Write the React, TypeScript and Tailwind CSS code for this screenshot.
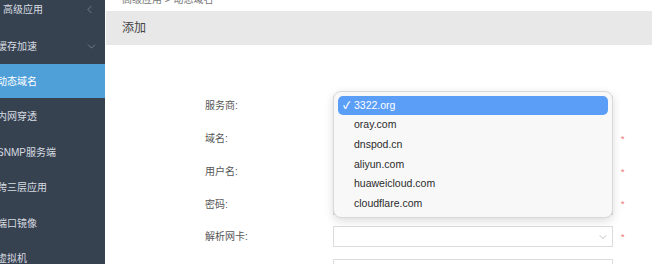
import { ChevronDown, ChevronLeft } from "lucide-react";

const font = { fontFamily: '"Liberation Sans", "Noto Sans CJK SC", sans-serif' };

const menu = ["内网穿透", "SNMP服务端", "跨三层应用", "端口镜像", "虚拟机"];

const providers = ["3322.org", "oray.com", "dnspod.cn", "aliyun.com", "huaweicloud.com", "cloudflare.com"];

function Sidebar() {
  return (
    <aside className="w-[105px] shrink-0 bg-[#374250] text-[10px] text-[#d6dbe1]">
      <div className="-mt-[9px] flex h-[37px] items-center justify-between pl-[3px] pr-[9px]">
        <span>高级应用</span>
        <ChevronLeft size={13} strokeWidth={1.3} className="text-[#8d96a1]" />
      </div>
      <div className="flex h-[36px] items-center justify-between pr-[7px]">
        <span className="-ml-[3px]">缓存加速</span>
        <ChevronDown size={13} strokeWidth={1.3} className="text-[#8d96a1]" />
      </div>
      <div className="flex h-[34px] items-center bg-[#4f9fd9] text-white">
        <span className="-ml-[3px]">动态域名</span>
      </div>
      <div className="pt-px">
        {menu.map((m) => (
          <div key={m} className="flex h-[35.5px] items-center">
            <span className="-ml-[3px] whitespace-nowrap">{m}</span>
          </div>
        ))}
      </div>
    </aside>
  );
}

function Row({ label, children, required }: { label: string; children?: React.ReactNode; required?: boolean }) {
  return (
    <div className="flex h-[32.75px] items-center">
      <div className="w-[128px] text-[10px] text-[#555]">{label}:</div>
      <div className="relative h-[21px] w-[280px]">{children}</div>
      {required && <span className="ml-[8px] mt-[2px] text-[9px] text-[#f36f6f]">*</span>}
    </div>
  );
}

function Popup() {
  return (
    <div className="absolute -top-[4.5px] left-0 z-10 w-[280px] rounded-[8px] border border-[#d9d9d9] bg-[#f8f8f8] p-[4px] shadow-[0_3px_10px_rgba(0,0,0,0.14)]">
      {providers.map((p, i) => (
        <div
          key={p}
          className={`relative flex h-[19.6px] items-center pl-[16px] text-[10.5px] ${
            i === 0 ? "rounded-[5px] bg-[#5a9ef7] text-white" : "text-[#2b2b2b]"
          }`}
        >
          {i === 0 && <span className="absolute left-[5px] text-[10px] font-bold">✓</span>}
          {p}
        </div>
      ))}
    </div>
  );
}

export default function App() {
  return (
    <div className="flex h-[264px] w-[666px] overflow-hidden bg-white" style={font}>
      <Sidebar />
      <main className="flex-1 pl-px pr-[14px]">
        <div className="-mt-[6px] h-[17px] pl-[16px] text-[10px] leading-[12px] text-[#777]">
          高级应用 &gt; 动态域名
        </div>
        <div className="flex h-[34px] items-center bg-[#e8e8e8] pl-[16px] text-[12px] text-[#444]">添加</div>
        <div className="mt-[44.5px] pl-[99px]">
          <Row label="服务商">
            <div className="h-full rounded-[2px] border border-[#dcdcdc]" />
            <Popup />
          </Row>
          <Row label="域名" required>
            <div className="h-full border border-[#dcdcdc]" />
          </Row>
          <Row label="用户名" required>
            <div className="h-full border border-[#dcdcdc]" />
          </Row>
          <Row label="密码" required>
            <div className="h-full border border-[#dcdcdc]" />
          </Row>
          <Row label="解析网卡" required>
            <div className="flex h-full items-center justify-end border border-[#dcdcdc] pr-[3px]">
              <ChevronDown size={12} strokeWidth={1.2} className="text-[#999]" />
            </div>
          </Row>
          <Row label="">
            <div className="h-full border border-[#dcdcdc]" />
          </Row>
        </div>
      </main>
    </div>
  );
}
